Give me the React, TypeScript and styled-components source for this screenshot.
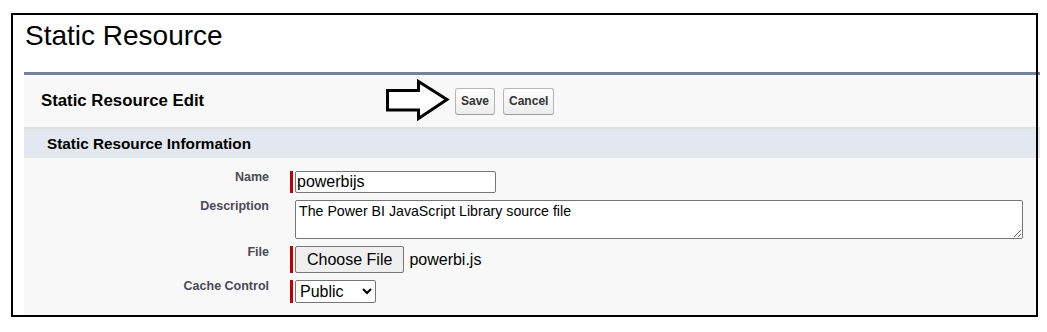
import styled, { createGlobalStyle } from 'styled-components';

const GlobalStyle = createGlobalStyle`
  body {
    margin: 0;
    background: #ffffff;
    font-family: Arial, "Liberation Sans", Helvetica, sans-serif;
  }
`;

// outer screenshot frame, its black border sits on top of the panel
const Frame = styled.div`
  position: relative;
  display: flex;
  flex-direction: column;
  box-sizing: border-box;
  width: 1027px;
  height: 304px;
  margin: 13px 0 0 11px;

  &::after {
    content: '';
    position: absolute;
    inset: 0;
    border: 2px solid #000000;
    pointer-events: none;
  }
`;

const PageTitle = styled.h1`
  margin: 7px 0 0 14px;
  font-size: 28px;
  line-height: 32px;
  font-weight: normal;
  color: #000000;
`;

const Panel = styled.div`
  flex: 1;
  display: flex;
  flex-direction: column;
  margin: 20px -2px 0 13px;
  border-top: 3px solid #76819c;
`;

const PanelHeader = styled.div`
  display: flex;
  align-items: center;
  height: 52px;
  padding-left: 17px;
  background: #f8f8f8;
  border-bottom: 2px solid #dedede;
`;

const PanelTitle = styled.h2`
  width: 344px;
  margin: 0;
  font-size: 16.8px;
  font-weight: bold;
  color: #000000;
`;

const ArrowIcon = styled.svg`
  display: block;
  margin: -3px 4px 0 0;
`;

const ButtonGroup = styled.div`
  display: flex;
  gap: 8px;
`;

const Btn = styled.button`
  height: 27px;
  padding: 0 5px;
  font-family: Arial, "Liberation Sans", sans-serif;
  font-size: 12px;
  font-weight: bold;
  color: #333333;
  background: linear-gradient(#ffffff, #ececec);
  border: 1px solid #b5b5b5;
  border-bottom-color: #9a9a9a;
  border-radius: 3px;
  cursor: pointer;
`;

const SectionBar = styled.div`
  display: flex;
  align-items: center;
  height: 29px;
  padding-left: 23px;
  background: #e3e7ef;
  font-size: 15.3px;
  font-weight: bold;
  color: #000000;
`;

const FormBody = styled.div`
  flex: 1;
  display: flex;
  flex-direction: column;
  gap: 7px;
  margin-right: 2px;
  padding-top: 13px;
  background: #f8f8f8;
`;

const Row = styled.div`
  display: flex;
  align-items: stretch;
`;

const FieldLabel = styled.label`
  box-sizing: border-box;
  width: 266px;
  padding-right: 21px;
  text-align: right;
  font-size: 12.5px;
  line-height: 12px;
  font-weight: bold;
  color: #4a4a56;
`;

const RequiredMark = styled.span<{ $required?: boolean }>`
  width: 3px;
  margin-right: 2px;
  background: ${(p) => (p.$required ? '#c00000' : 'transparent')};
`;

const TextInput = styled.input`
  box-sizing: border-box;
  width: 201px;
  height: 22px;
  padding: 1px;
  font-family: Arial, "Liberation Sans", sans-serif;
  font-size: 16px;
  color: #000000;
  background: #ffffff;
  border: 1px solid #767676;
  border-radius: 2px;
  outline: none;
`;

const TextArea = styled.textarea`
  box-sizing: border-box;
  width: 728px;
  height: 39px;
  padding: 2px 3px;
  font-family: Arial, "Liberation Sans", sans-serif;
  font-size: 14.2px;
  color: #000000;
  background: #ffffff;
  border: 1px solid #767676;
  border-radius: 2px;
  outline: none;
`;

const FilePicker = styled.div`
  display: flex;
  align-items: center;
`;

const FileButton = styled.button`
  box-sizing: border-box;
  height: 27px;
  padding: 0 11px;
  font-family: Arial, "Liberation Sans", sans-serif;
  font-size: 16px;
  color: #000000;
  background: #efefef;
  border: 1px solid #767676;
  border-radius: 2px;
`;

const FileName = styled.span`
  margin-left: 5px;
  font-size: 16px;
  color: #000000;
`;

const Select = styled.select`
  box-sizing: border-box;
  width: 81px;
  height: 23px;
  font-family: Arial, "Liberation Sans", sans-serif;
  font-size: 16px;
  color: #000000;
  background: #ffffff;
  border: 1px solid #767676;
  border-radius: 2px;
`;

export default function App() {
  return (
    <>
      <GlobalStyle />
      <Frame>
        <PageTitle>Static Resource</PageTitle>
        <Panel>
          <PanelHeader>
            <PanelTitle>Static Resource Edit</PanelTitle>
            <ArrowIcon width="66" height="42" viewBox="0 0 66 42">
              <path
                d="M2.5 11.5 H33.5 V2.5 L62 20.5 L33.5 39.5 V31 H2.5 Z"
                fill="#ffffff"
                stroke="#000000"
                strokeWidth="3"
                strokeLinejoin="miter"
              />
            </ArrowIcon>
            <ButtonGroup>
              <Btn>Save</Btn>
              <Btn>Cancel</Btn>
            </ButtonGroup>
          </PanelHeader>
          <SectionBar>Static Resource Information</SectionBar>
          <FormBody>
            <Row>
              <FieldLabel>Name</FieldLabel>
              <RequiredMark $required />
              <TextInput defaultValue="powerbijs" />
            </Row>
            <Row>
              <FieldLabel>Description</FieldLabel>
              <RequiredMark />
              <TextArea defaultValue="The Power BI JavaScript Library source file" />
            </Row>
            <Row>
              <FieldLabel>File</FieldLabel>
              <RequiredMark $required />
              <FilePicker>
                <FileButton>Choose File</FileButton>
                <FileName>powerbi.js</FileName>
              </FilePicker>
            </Row>
            <Row>
              <FieldLabel>Cache Control</FieldLabel>
              <RequiredMark $required />
              <Select defaultValue="Public">
                <option>Public</option>
                <option>Private</option>
              </Select>
            </Row>
          </FormBody>
        </Panel>
      </Frame>
    </>
  );
}
